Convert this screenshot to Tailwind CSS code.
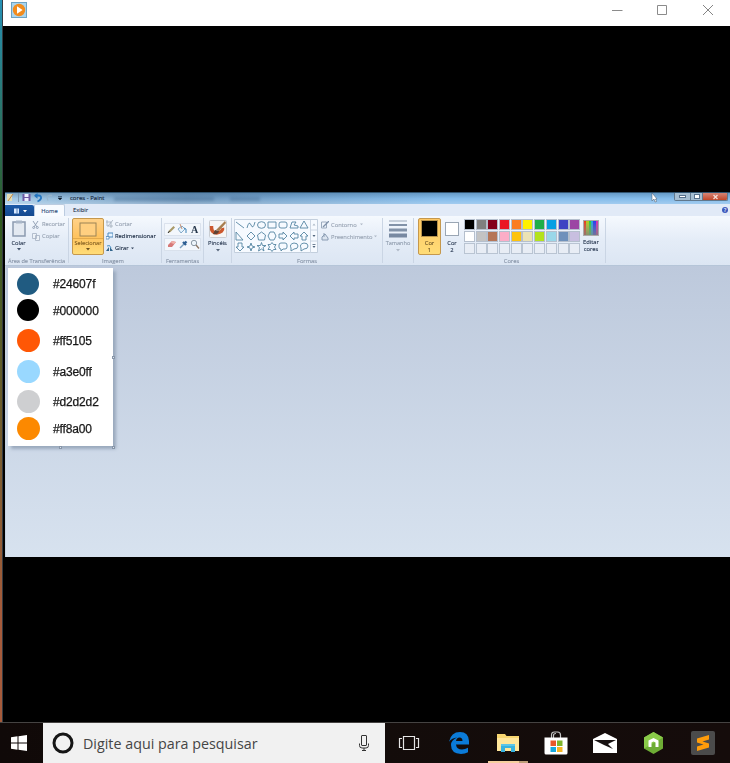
<!DOCTYPE html>
<html lang="pt-BR">
<head>
<meta charset="utf-8">
<title>cores - Paint</title>
<script src="https://cdn.jsdelivr.net/npm/@tailwindcss/browser@4"></script>
</head>
<body class="w-[730px] h-[763px] overflow-hidden bg-black font-['Open_Sans','Noto_Sans',sans-serif] flex flex-col">
<main class="h-[722px] flex shrink-0">
  <div class="w-[3px] shrink-0 border-r border-[#343b42] bg-linear-to-b from-[#2791b5] from-0% via-[#2c5a20] via-30% to-[#a65b3b] to-85%"></div>
  <div class="flex-1 min-w-0 flex flex-col bg-black">
    <!-- Player title bar -->
    <header class="h-[26px] shrink-0 bg-white flex justify-between pl-2 pr-[16px]">
      <svg class="mt-[2px]" width="16" height="16" viewBox="0 0 16 16"><rect x=".5" y=".5" width="15" height="15" fill="#a9d5ef" stroke="#6da3c4"/><circle cx="8" cy="8" r="6.2" fill="#f28c1e"/><path d="M6 4.2v7.6L11.6 8z" fill="#fff"/></svg>
      <div class="flex mt-[4px] gap-[32px]">
        <svg width="13" height="13" viewBox="0 0 13 13"><path d="M1 6.5h10.500" stroke="#8b8b8b"/></svg>
        <svg width="13" height="13" viewBox="0 0 13 13"><path d="M1.500 1.500h9v9h-9z" stroke="#8b8b8b" fill="none"/></svg>
        <svg width="13" height="13" viewBox="0 0 13 13"><path d="M2 1l10 10M12 1L2 11" stroke="#858585"/></svg>
      </div>
    </header>
    <!-- Video frame -->
    <section class="mt-[166px] ml-[2px] h-[365px] flex flex-col overflow-hidden text-[5.8px] leading-[8px] text-[#26364f] whitespace-nowrap">
      <div class="h-[12px] shrink-0 flex items-center border-t border-[#315470] bg-linear-to-r from-[#a5cbe8] from-0% via-[#7098bd] via-25% to-[#83bbea] to-60% relative">
        <div class="absolute inset-0 bg-linear-to-b from-[#204b72]/30 via-transparent to-white/25"></div>
        <svg class="relative ml-[1px] -mt-[3px]" width="59" height="11" viewBox="0 0 59 11"><path d="M1 2h5v7H1z" fill="#e3ddb5"/><path d="M2 9l5-7" stroke="#c78943"/><path d="M12.500 1v9" stroke="#7995af"/><path d="M16.500 2h8v7h-8z" fill="#6c59a3"/><path d="M18.500 2h4v3h-4zM18.500 6h4v3h-4z" fill="#eef"/><path d="M29 3.500h3.500q3 0 2.500 3-1 2-3.500 3" fill="none" stroke="#2375c0" stroke-width="1.800"/><path d="M31.500 1L28 3.700l3.500 3z" fill="#2375c0"/><path d="M46 3.500h-3q-3 1-1 5" fill="none" stroke="#96b4cc" stroke-width="1.300"/><path d="M52 4.500h4M52 6h4l-2 2z" stroke="#263f59" stroke-width=".7"/></svg>
        <span class="relative ml-[5px] -mt-[2px] text-[6px] text-[#182b42] w-[36px] [-webkit-text-stroke:.15px]">cores - Paint</span>
        <div class="relative ml-[8px] w-[100px] h-[4px] bg-[#365f88]/35 blur-[1.5px]"></div>
        <div class="relative ml-[16px] w-[30px] h-[4px] bg-[#365f88]/35 blur-[1.5px]"></div>
        <svg class="relative ml-auto mr-[16px] -mt-[2px]" width="7" height="11" viewBox="0 0 7 11"><path d="M1 1v8l2-2 1 3 1.500-.5L4.500 7H6z" fill="#fff" stroke="#456"  stroke-width=".5"/></svg>
        <div class="relative self-start flex h-[8px] w-[54px] mr-[2px] rounded-b-[2px] overflow-hidden border border-[#60788d] border-t-0 blur-[.3px]">
          <div class="w-[15px] bg-[#a5bed2] flex items-center justify-center"><div class="w-[7px] h-[3px] border border-[#57718c] bg-white"></div></div>
          <div class="w-[13px] bg-[#a5bed2] border-x border-[#60788d] flex items-center justify-center"><div class="w-[6px] h-[5px] border border-[#57718c] bg-white"></div></div>
          <div class="flex-1 bg-linear-to-b from-[#d58475] to-[#c14527] flex items-center justify-center"><svg width="7" height="6" viewBox="0 0 7 6"><path d="M1.500 1l4 4M5.500 1l-4 4" stroke="#f6dcd6" stroke-width="1.300"/></svg></div>
        </div>
      </div>
      <nav class="h-[12px] shrink-0 bg-[#e1eaf7] flex items-end relative [-webkit-text-stroke:.12px]">
        <div class="w-[29px] h-[11px] rounded-tr-[2px] bg-linear-to-b from-[#1d5ba8] to-[#15498f] flex items-center justify-center gap-[3px]"><svg width="14" height="8" viewBox="0 0 14 8"><path d="M1 1.500h5v5H1z" fill="#d9eaff"/><path d="M4 1v6" stroke="#5481bb"/><path d="M10 3h4l-2 2.500z" fill="#fff"/></svg></div>
        <div class="w-[31px] h-[12px] rounded-t-[2px] bg-[#f8fbff] border border-b-0 border-[#bccce0] text-center leading-[12px] text-[#284675]">Home</div>
        <div class="ml-[8px] leading-[12px]">Exibir</div>
        <div class="ml-auto mr-[2px] mb-[3px] size-[6px] rounded-full bg-[#3d59bd] text-white text-[5px] leading-[6px] text-center">?</div>
      </nav>
      <div class="h-[50px] shrink-0 flex py-[2px] bg-linear-to-b from-[#f5f9fe] via-[#e4ecf7] to-[#dce6f3] border-b border-[#b5c5d8] blur-[.25px] [-webkit-text-stroke:.12px]">
        <div class="w-[64px] border-r border-[#cad5e4] flex flex-col shrink-0">
          <div class="h-[37px] shrink-0 flex">
            <div class="w-[27px] flex flex-col items-center pt-[2px]"><svg width="16" height="18" viewBox="0 0 16 18"><path d="M2 2h12v14H2z" fill="#e3e9f1" stroke="#8c9bb0" stroke-width="1.500"/><path d="M5 .5h6v3H5z" fill="#a9b6c8"/></svg><span class="mt-px">Colar</span><svg class="mt-px" width="4" height="3" viewBox="0 0 4 3"><path d="M0 0h4L2 2.500z" fill="#43536b"/></svg></div>
            <div class="text-[#98a3b3] pt-[2px] flex flex-col gap-[3px]">
              <div class="flex gap-[3px] h-[9px] items-center"><svg width="7" height="8" viewBox="0 0 7 8"><path d="M1 0l4 6M6 0L2 6" stroke="#94a2b6"/><circle cx="1.700" cy="6.500" r="1" fill="none" stroke="#94a2b6"/><circle cx="5.300" cy="6.500" r="1" fill="none" stroke="#94a2b6"/></svg><span class="-mt-px">Recortar</span></div>
              <div class="flex gap-[2px] h-[9px] items-center"><svg width="8" height="8" viewBox="0 0 8 8"><path d="M.5.500h4v5h-4zM3.500 2.500h4v5h-4z" fill="#edf2f8" stroke="#a4b0c1" stroke-width=".8"/></svg><span class="-mt-px">Copiar</span></div>
            </div>
          </div>
          <div class="text-center text-[#8794a7] text-[5.6px] leading-[9px] pt-[2px]">Área de Transferência</div>
        </div>
        <div class="w-[93px] border-r border-[#cad5e4] flex flex-col shrink-0 pl-[3px]">
          <div class="h-[37px] shrink-0 flex">
            <div class="w-[32px] h-[37px] rounded-[2px] border border-[#c5984d] bg-linear-to-b from-[#ffd187] via-[#ffc35f] to-[#ffdc77] flex flex-col items-center pt-[3px] text-[#825d20]"><svg width="18" height="16" viewBox="0 0 18 16"><rect x="1" y="1" width="16" height="13" fill="#ffcf80" stroke="#9c8456"/></svg><span class="w-full text-center border-t border-[#e4aa4c] text-[5.6px]">Selecionar</span><svg class="mt-px" width="4" height="3" viewBox="0 0 4 3"><path d="M0 0h4L2 2.500z" fill="#6b501f"/></svg></div>
            <div class="ml-[2px] pt-[0px] text-[#17273f]">
              <div class="h-[12px] flex items-center gap-[2px] text-[#98a3b3]"><svg width="7" height="8" viewBox="0 0 7 8"><path d="M1 0v6h6M0 2h5v6M2 6l5-6" fill="none" stroke="#a1acba" stroke-width=".8"/></svg>Cortar</div>
              <div class="h-[12px] flex items-center gap-[2px]"><svg width="7" height="8" viewBox="0 0 7 8"><path d="M2 1h5v4H2z" fill="#e7f4ff" stroke="#4f89bd"/><path d="M0 4.500h3v2.500H0z" fill="#fff" stroke="#4f89bd" stroke-width=".8"/></svg>Redimensionar</div>
              <div class="h-[12px] flex items-center gap-[2px]"><svg width="7" height="8" viewBox="0 0 7 8"><path d="M0 7l3-4v4zM4 7h3L4 3z" fill="#33668d"/><path d="M1 2q3-2 4 2" fill="none" stroke="#4b90c3"/></svg>Girar<svg width="3" height="3" viewBox="0 0 4 3"><path d="M0 0h4L2 2.500z" fill="#33435d"/></svg></div>
            </div>
          </div>
          <div class="text-center text-[#8794a7] leading-[9px] pt-[2px] pr-[7px]">Imagem</div>
        </div>
        <div class="w-[42px] border-r border-[#cad5e4] flex flex-col shrink-0 items-center">
          <svg class="shrink-0" width="38" height="37" viewBox="0 -1 38 37"><path d="M.5 4.500h36v12H.5zM.5 19.500h36v12H.5z" fill="#f3f7fc" stroke="#d1dae7" stroke-width=".7"/><path d="M4 14l1-2.500L9.500 7l1.500 1.500L6.500 13z" fill="#a99a69"/><path d="M4 14l1.500-2" stroke="#333"/><path d="M14 10l4-3 3 3-4 4z" fill="#e6f4fe" stroke="#6a98bc" stroke-width=".8"/><path d="M20 9l2 1v4" stroke="#3d82b7" fill="none"/><path d="M16 5l2 5" stroke="#be7955" stroke-width=".8"/><text x="27" y="14" font-size="10" font-family="Liberation Serif" font-weight="bold" fill="#25364a">A</text><path d="M4 26l4-4 4 1-4 5H4z" fill="#d67978"/><path d="M8 22l4 1-2 2-3-1z" fill="#f0b1aa"/><path d="M16 29l4-4" stroke="#7b9fbf" stroke-width="1.500"/><path d="M19 23l3 3M20.500 24.500l2-2" stroke="#2e5f93" stroke-width="2.300"/><circle cx="30" cy="24" r="2.700" fill="#edf5fb" stroke="#8d9aa6"/><path d="M32 26l3 3.500" stroke="#8b7663" stroke-width="1.300"/></svg>
          <div class="text-[#8794a7] text-[5.6px] leading-[9px] pt-[2px]">Ferramentas</div>
        </div>
        <div class="w-[28px] border-r border-[#cad5e4] flex flex-col shrink-0 items-center pt-[2px]">
          <svg class="shrink-0" width="18" height="18" viewBox="0 0 18 18"><rect x=".5" y=".5" width="17" height="17" rx="1" fill="#f6f6f5" stroke="#c9cdd2"/><path d="M2.500 6q-.5 7 5 7 7-1 6-5" fill="none" stroke="#cc582d" stroke-width="3.500"/><path d="M16 1l1 2-7 8-3-1z" fill="#a87e50"/><path d="M6 10l4 1q-1 4-6 3z" fill="#5e4335"/></svg>
          <span class="mt-[1px]">Pincéis</span><svg class="mt-[2px]" width="4" height="3" viewBox="0 0 4 3"><path d="M0 0h4L2 2.500z" fill="#56657a"/></svg>
        </div>
        <div class="w-[151px] border-r border-[#cad5e4] flex flex-col shrink-0 pl-[2px]">
          <div class="h-[37px] shrink-0 flex pt-[1px]">
            <svg width="84" height="35" viewBox="0 0 84 35"><path d="M.5.500h83v33H.5z" fill="#f6faff" stroke="#c3cfdd"/><path d="M76.500 1v33M76.500 11h7M76.500 22h7" stroke="#ccd6e3"/><g fill="none" stroke="#5686a3" stroke-width=".9"><path d="M2 3l8 6M13 9q2-8 4-3t4-3"/><ellipse cx="27.500" cy="6" rx="4" ry="3.300"/><path d="M34 3h8v6h-8z"/><rect x="45" y="3" width="8" height="6" rx="2"/><path d="M56 9l2-6h4l-2 3 4 1v2zM70 2l4 7h-8zM2 13v8h7zM17 13l4 4-4 4-4-4zM27.500 13l4 3-1 5h-6l-1-5z"/><path d="M36 13h4l2 4-2 4h-4l-2-4zM45 15h4v-2l4 4-4 4v-2h-4zM64 15h-4v-2l-4 4 4 4v-2h4zM70 13l4 4h-2v4h-4v-4h-2zM4 24h4v4h2l-4 4-4-4h2zM17 24l1 3 3 1-3 1-1 3-1-3-3-1 3-1zM27.500 23.500l1 3h3.500l-3 2 1 3.500-2.500-2-3 2 1-3.500-2.500-2h3.500zM38 23.500l1.500 2H42l-1.500 2.500L42 30.500h-2.500l-1.500 2-1.500-2H34l1.500-2.500-1.500-2.500h2.500z"/><path d="M47 24h4q2 0 2 2v2q0 2-2 2h-2l-2 2v-2q-2 0-2-2v-2q0-2 2-2zM60 24q4 0 4 3t-4 3l-3 2v-3q-2-4 3-5zM70 24q4 0 4 3t-4 3l-3 2v-3q-2-4 3-5z"/></g><path d="M78.500 16h3l-1.500 2zM78.500 27h3l-1.500 2z" fill="#50647b"/><path d="M78.500 25.500h3" stroke="#50647b" stroke-width=".8"/><path d="M78.500 6.500h3l-1.500-2z" fill="#adb9c7"/></svg>
            <div class="ml-[3px] text-[#98a3b3] flex flex-col gap-[3px] pt-[1px]">
              <div class="h-[9px] flex items-center gap-[2px]"><svg width="8" height="8" viewBox="0 0 8 8"><path d="M.5 1h5v6h-5z" fill="none" stroke="#9baabd"/><path d="M2 6l6-6" stroke="#7f91a9" stroke-width="1.300"/></svg><span>Contorno</span><svg class="ml-px" width="3" height="3" viewBox="0 0 4 3"><path d="M0 0h4L2 2.500z" fill="#aeb8c5"/></svg></div>
              <div class="h-[9px] flex items-center gap-[2px]"><svg width="8" height="8" viewBox="0 0 8 8"><path d="M1 4l3-3 3 4v2H1z" fill="#dbe4ef" stroke="#8a9cb3"/><path d="M3 0v4" stroke="#8a9cb3"/></svg><span>Preenchimento</span><svg width="3" height="3" viewBox="0 0 4 3"><path d="M0 0h4L2 2.500z" fill="#aeb8c5"/></svg></div>
            </div>
          </div>
          <div class="text-center text-[#8794a7] leading-[9px] pt-[2px] pr-[2px]">Formas</div>
        </div>
        <div class="w-[31px] border-r border-[#cad5e4] flex flex-col shrink-0 items-center pt-[2px] text-[#8f9cad]">
          <svg class="shrink-0" width="18" height="18" viewBox="0 0 18 18"><path d="M0 1h18" stroke="#9aa7b8"/><path d="M0 5h18" stroke="#8292a8" stroke-width="2"/><path d="M0 10h18" stroke="#8292a8" stroke-width="3"/><path d="M0 15.500h18" stroke="#7889a2" stroke-width="4"/></svg><span class="mt-px text-[5.6px]">Tamanho</span><svg class="mt-[2px]" width="4" height="3" viewBox="0 0 4 3"><path d="M0 0h4L2 2.500z" fill="#b0bac8"/></svg>
        </div>
        <div class="w-[192px] border-r border-[#cad5e4] flex flex-col shrink-0 pl-[4px]">
          <div class="h-[37px] shrink-0 flex">
            <div class="w-[23px] h-[37px] rounded-[2px] border border-[#c5984d] bg-linear-to-b from-[#ffc864] to-[#ffdc77] flex flex-col items-center pt-[1px] leading-[7px] text-[#6b5426]"><div class="size-[17px] border border-[#b8924c] bg-black mb-[3px] shrink-0"></div><span>Cor</span><span>1</span></div>
            <div class="w-[22px] flex flex-col items-center pt-[4px] leading-[7px]"><div class="size-[14px] bg-white border border-[#9aa6b4] mb-[4px] shrink-0"></div><span>Cor</span><span>2</span></div>
            <div class="w-[117px] ml-px pt-[1px] grid grid-cols-10 grid-rows-[11px_11px_11px] gap-y-[1px]">
              <div class="w-[11px] bg-black border border-[#b5bfcd]"></div><div class="w-[11px] bg-[#7f7f7f] border border-[#b5bfcd]"></div><div class="w-[11px] bg-[#83001b] border border-[#b5bfcd]"></div><div class="w-[11px] bg-[#eb1724] border border-[#b5bfcd]"></div><div class="w-[11px] bg-[#fb7d22] border border-[#b5bfcd]"></div><div class="w-[11px] bg-[#fff100] border border-[#b5bfcd]"></div><div class="w-[11px] bg-[#1fae49] border border-[#b5bfcd]"></div><div class="w-[11px] bg-[#059fe3] border border-[#b5bfcd]"></div><div class="w-[11px] bg-[#3e43c3] border border-[#b5bfcd]"></div><div class="w-[11px] bg-[#9c45a4] border border-[#b5bfcd]"></div>
              <div class="w-[11px] bg-white border border-[#b5bfcd]"></div><div class="w-[11px] bg-[#c3c3c3] border border-[#b5bfcd]"></div><div class="w-[11px] bg-[#b57658] border border-[#b5bfcd]"></div><div class="w-[11px] bg-[#fcadc7] border border-[#b5bfcd]"></div><div class="w-[11px] bg-[#fdc30e] border border-[#b5bfcd]"></div><div class="w-[11px] bg-[#ebe2b4] border border-[#b5bfcd]"></div><div class="w-[11px] bg-[#b4e21d] border border-[#b5bfcd]"></div><div class="w-[11px] bg-[#9ad7e9] border border-[#b5bfcd]"></div><div class="w-[11px] bg-[#6f91bb] border border-[#b5bfcd]"></div><div class="w-[11px] bg-[#c8bfe0] border border-[#b5bfcd]"></div>
              <div class="w-[11px] bg-[#e8edf5] border border-[#b9c4d2]"></div><div class="w-[11px] bg-[#e8edf5] border border-[#b9c4d2]"></div><div class="w-[11px] bg-[#e8edf5] border border-[#b9c4d2]"></div><div class="w-[11px] bg-[#e8edf5] border border-[#b9c4d2]"></div><div class="w-[11px] bg-[#e8edf5] border border-[#b9c4d2]"></div><div class="w-[11px] bg-[#e8edf5] border border-[#b9c4d2]"></div><div class="w-[11px] bg-[#e8edf5] border border-[#b9c4d2]"></div><div class="w-[11px] bg-[#e8edf5] border border-[#b9c4d2]"></div><div class="w-[11px] bg-[#e8edf5] border border-[#b9c4d2]"></div><div class="w-[11px] bg-[#e8edf5] border border-[#b9c4d2]"></div>
            </div>
            <div class="w-[20px] flex flex-col items-center pt-[2px] leading-[7px]"><div class="size-[16px] shrink-0 border border-[#aaa] mb-[3px] flex"><i class="flex-1 bg-linear-to-b from-[#e93b19] to-[#98736a]"></i><i class="flex-1 bg-linear-to-b from-[#b5cb18] to-[#88916a]"></i><i class="flex-1 bg-linear-to-b from-[#24cf35] to-[#6b9b75]"></i><i class="flex-1 bg-linear-to-b from-[#1aa9d9] to-[#69909c]"></i><i class="flex-1 bg-linear-to-b from-[#3039ee] to-[#70729c]"></i><i class="flex-1 bg-linear-to-b from-[#d32eb5] to-[#936a8a]"></i></div><span>Editar</span><span>cores</span></div>
          </div>
          <div class="text-center text-[#8794a7] leading-[9px] pt-[2px]">Cores</div>
        </div>
      </div>
      <div class="flex-1 bg-linear-to-b from-[#bdc9dc] to-[#d7e2ef] pt-[2px] pl-[2px] border-l border-[#c8d3e2]">
        <div class="w-[105px] h-[178px] relative bg-white shadow-[3px_3px_3px_#9aa9bd] text-[12px] tracking-[-.15px] leading-[16px] text-[#171717] font-['Liberation_Sans',Arial,sans-serif] pl-[9px] pt-[5px] blur-[.25px]">
          <div class="h-[26px] flex items-start gap-[14px]"><i class="size-[22px] rounded-full bg-[#205b81] shrink-0"></i><span class="mt-[3px] [-webkit-text-stroke:.25px]">#24607f</span></div>
          <div class="h-[30px] flex items-start gap-[14px]"><i class="size-[22px] rounded-full bg-black shrink-0"></i><span class="mt-[4px] [-webkit-text-stroke:.25px]">#000000</span></div>
          <div class="h-[31px] flex items-start gap-[14px]"><i class="size-[23px] rounded-full bg-[#ff5705] shrink-0"></i><span class="-ml-px mt-[4px] [-webkit-text-stroke:.25px]">#ff5105</span></div>
          <div class="h-[30px] flex items-start gap-[14px]"><i class="size-[23px] rounded-full bg-[#99d8ff] shrink-0"></i><span class="-ml-px mt-[4px] [-webkit-text-stroke:.25px]">#a3e0ff</span></div>
          <div class="h-[27px] flex items-start gap-[14px]"><i class="size-[23px] rounded-full bg-[#cecfd1] shrink-0"></i><span class="-ml-px mt-[4px] [-webkit-text-stroke:.25px]">#d2d2d2</span></div>
          <div class="h-[27px] flex items-start gap-[14px]"><i class="size-[23px] rounded-full bg-[#fc8900] shrink-0"></i><span class="-ml-px mt-[4px] [-webkit-text-stroke:.25px]">#ff8a00</span></div>
          <i class="absolute -right-[2px] top-[88px] size-[3px] border border-[#8795a8] bg-[#dde6f0]"></i><i class="absolute -right-[2px] -bottom-[3px] size-[3px] border border-[#8795a8] bg-[#dde6f0]"></i><i class="absolute left-[51px] -bottom-[3px] size-[3px] border border-[#8795a8] bg-[#dde6f0]"></i>
        </div>
      </div>
    </section>
  </div>
</main>
<footer class="h-[41px] shrink-0 border-t border-[#454342] bg-linear-to-r from-[#100908] via-[#130c0a] to-[#150c0b] flex">
  <div class="w-[43px] flex items-center justify-center pr-[5px]"><svg width="16" height="16" viewBox="0 0 16 16"><path d="M0 2.200l6.500-.9v6.200H0zM7.500 1.200L16 0v7.500H7.500zM0 8.500h6.500v6.200L0 13.800zM7.500 8.500H16V16l-8.500-1.200z" fill="#fff"/></svg></div>
  <div class="w-[342px] bg-[#f1f1f1] flex items-center pl-[9px] pr-[14px]">
    <svg width="22" height="22" viewBox="0 0 22 22"><circle cx="11" cy="11" r="9" fill="none" stroke="#151515" stroke-width="3"/></svg>
    <span class="ml-[9px] mt-px text-[14.300px] leading-[20px] text-[#454545] whitespace-nowrap font-['Open_Sans','Noto_Sans',sans-serif]">Digite aqui para pesquisar</span>
    <svg class="ml-auto" width="13" height="18" viewBox="0 0 13 18"><rect x="3.500" y="1.500" width="5" height="10" rx=".5" fill="none" stroke="#333"/><path d="M1.500 9.500v2q0 2.500 2.500 2.500h4q2.500 0 2.500-2.500v-2M6 14v2.500M4 16.500h4" fill="none" stroke="#333"/></svg>
  </div>
  <div class="w-[48px] flex items-center justify-center"><svg width="22" height="16" viewBox="0 0 22 16"><path d="M5.500 1.500h11v13h-11zM4 3.500H1.500v9H4M18 3.500h2.500v9H18" fill="none" stroke="#e5e5e5" stroke-width="1.200"/></svg></div>
  <div class="w-[54px] flex items-center justify-center pr-[2px]"><svg width="20" height="22" viewBox="0 0 20 22"><path d="M0 9.700Q2 0 11 0q8.500 0 9 9v3.500H7q.5 5 6 5 3 0 6-1.700v4.400Q16 22 12 22 2 21.500 2 13q0-5 6-7.500Q3 6 0 9.700zM7 9h6.500Q13.500 5.500 10.500 5.500T7 9z" fill="#0b7bd8"/></svg></div>
  <div class="w-[40px] ml-[1px] flex flex-col items-center justify-between pt-[10px]"><svg width="22" height="20" viewBox="0 0 22 20"><path d="M0 1h8l1.500 2H22v15H0z" fill="#f7d670"/><path d="M0 5h22v13H0z" fill="#ffe69b"/><path d="M4 19v-8h14v8h-4v-4H8v4z" fill="#38b2df"/><path d="M4 11h14v2H4z" fill="#5cc5e8"/></svg><div class="w-[40px] h-[2px] bg-[#f5cf9e] flex justify-end"><i class="w-[9px] bg-[#bd9e78]"></i></div></div>
  <div class="w-[57px] flex items-center justify-center pr-px"><svg width="24" height="24" viewBox="0 0 24 24"><path d="M7.500 7V4q0-3 3-3h3q3 0 3 3v3M9.500 7V4.500q0-2 2.500-2" fill="none" stroke="#c4c4c4" stroke-width="1.200"/><path d="M.5 6.500h23V22q0 1.500-1.500 1.500H2Q.5 23.500.5 22z" fill="#fff"/><path d="M6.500 9.500H12V15H6.500z" fill="#e9582a"/><path d="M13 9.500h5.500V15H13z" fill="#80b52b"/><path d="M6.500 16H12v5H6.500z" fill="#18a8de"/><path d="M13 16h5.500v5H13z" fill="#f6b523"/></svg></div>
  <div class="w-[40px] flex items-center justify-center"><svg width="24" height="20" viewBox="0 0 24 20"><path d="M0 6L12 0l12 6v14H0z" fill="#fff"/><path d="M1 7h22l-8 4 5 5-9-4z" fill="#171010"/></svg></div>
  <div class="w-[57px] flex items-center justify-center"><svg width="21" height="22" viewBox="0 0 21 22"><path d="M10.500 0L20 5.500v11L10.500 22 1 16.500v-11z" fill="#6ead35"/><path d="M10.500 0L20 5.500 1 16.500v-11z" fill="#8acb49"/><path d="M5.500 15V8.500l5-2.500 5 2.500V15h-3v-4.500l-2-1-2 1V15z" fill="#fff"/></svg></div>
  <div class="w-[41px] flex items-center justify-center"><svg width="24" height="24" viewBox="0 0 24 24"><rect width="24" height="24" rx="2" fill="#4b4b4b"/><path d="M6 7.500L18 4v4.500L11.500 10.500 18 12.500v4L6 20v-4.500l6.500-2L6 11.500z" fill="#ff9c0b"/></svg></div>
</footer>
</body>
</html>
